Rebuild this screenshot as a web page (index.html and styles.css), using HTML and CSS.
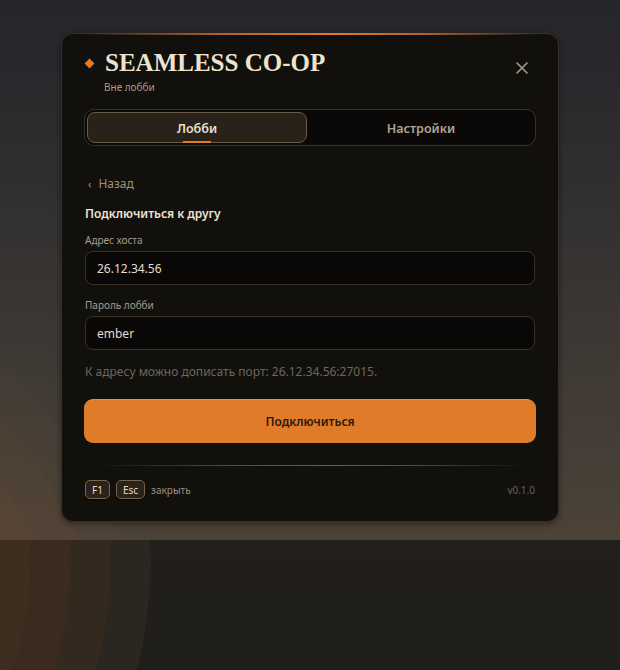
FILE: index.html
```html
<!DOCTYPE html>
<html lang="ru">
<head>
<meta charset="utf-8">
<title>Seamless Co-op</title>
<link rel="stylesheet" href="styles.css">
</head>
<body>
<div class="stage">
  <div class="card">
    <header class="head">
      <div class="brand">
        <div class="title-row">
          <span class="diamond"></span>
          <h1 class="title">SEAMLESS CO-OP</h1>
        </div>
        <div class="subtitle">Вне лобби</div>
      </div>
      <button class="close" aria-label="Закрыть">
        <svg width="14" height="14" viewBox="0 0 14 14"><path d="M2 2L12 12M12 2L2 12" stroke="currentColor" stroke-width="1.6" stroke-linecap="round"/></svg>
      </button>
    </header>

    <nav class="tabs">
      <div class="tab active"><span class="tab-label">Лобби</span></div>
      <div class="tab">Настройки</div>
    </nav>

    <div class="back"><span class="chev">‹</span>Назад</div>

    <h2 class="section">Подключиться к другу</h2>

    <label class="label">Адрес хоста</label>
    <div class="input">26.12.34.56</div>

    <label class="label">Пароль лобби</label>
    <div class="input">ember</div>

    <p class="hint">К адресу можно дописать порт: 26.12.34.56:27015.</p>

    <button class="primary">Подключиться</button>

    <div class="divider"></div>

    <footer class="foot">
      <div class="keys">
        <span class="kbd">F1</span>
        <span class="kbd">Esc</span>
        <span class="keys-text">закрыть</span>
      </div>
      <span class="version">v0.1.0</span>
    </footer>
  </div>
</div>
</body>
</html>
```
FILE: styles.css
```css
html {
  height: 100%;
  background:
    radial-gradient(circle at -300px 560px,
      #3e2e1f 0, #3e2e1f 330px,
      #3a2b1e 331px, #3a2b1e 370px,
      #33291f 371px, #33291f 410px,
      #2b2620 411px, #2b2620 450px,
      rgba(37,34,31,0) 451px),
    linear-gradient(#262320, #201e1b);
}
body {
  margin: 0;
  font-family: "Noto Sans", "Open Sans", sans-serif;
}
.stage {
  height: 540px;
  padding-top: 33px;
  box-sizing: border-box;
  display: flex;
  justify-content: center;
  background:
    radial-gradient(circle at -300px 700px,
      rgba(120,80,45,0.35) 0, rgba(120,80,45,0.35) 330px,
      rgba(120,80,45,0.25) 331px, rgba(120,80,45,0.25) 370px,
      rgba(120,80,45,0.14) 371px, rgba(120,80,45,0.14) 410px,
      rgba(120,80,45,0.06) 411px, rgba(120,80,45,0.06) 450px,
      rgba(120,80,45,0) 451px),
    linear-gradient(#25262b 0%, #2e2d2f 30%, #403a35 70%, #4c4238 100%);
}
.card {
  width: 498px;
  height: 489px;
  box-sizing: border-box;
  padding: 13px 23px 0;
  background: #12100d;
  border: 1px solid #3a2f22;
  border-radius: 12px;
  box-shadow: 0 2px 6px rgba(0,0,0,0.4);
  position: relative;
}
.card::before {
  content: "";
  position: absolute;
  left: 20px;
  right: 20px;
  top: -1px;
  height: 2px;
  background: linear-gradient(90deg, rgba(224,123,42,0) 0%, #b0622a 30%, #e07b2a 55%, #b0622a 75%, rgba(224,123,42,0) 100%);
}
.head {
  display: flex;
  justify-content: space-between;
  align-items: flex-start;
}
.title-row {
  display: flex;
  align-items: center;
  gap: 12px;
}
.diamond {
  width: 7px;
  height: 7px;
  background: #e07b2a;
  transform: rotate(45deg);
  margin-left: 1px;
}
.title {
  margin: 0;
  font-family: "Liberation Serif", "Times New Roman", serif;
  font-weight: 700;
  font-size: 25px;
  line-height: 32px;
  color: #eee3cf;
}
.subtitle {
  margin: 1px 0 0 19px;
  font-size: 10px;
  line-height: 14px;
  color: #a79a86;
}
.close {
  margin-top: 14px;
  margin-right: 6px;
  background: none;
  border: 0;
  padding: 0;
  color: #a8998a;
  display: flex;
}
.tabs {
  margin-top: 15px;
  display: flex;
  padding: 2px;
  height: 37px;
  box-sizing: border-box;
  margin-left: -1px;
  margin-right: -1px;
  background: #0b0908;
  border: 1px solid #3a3026;
  border-radius: 10px;
  gap: 2px;
}
.tab {
  flex: 1;
  display: flex;
  align-items: center;
  justify-content: center;
  padding-top: 1px;
  font-size: 12.5px;
  font-weight: 600;
  color: #b0a493;
  border-radius: 8px;
  border: 1px solid transparent;
}
.tab.active {
  flex: 0 0 218px;
  background: #29221b;
  border-color: #6b5a45;
  color: #ece0cc;
}
.tab-label {
  position: relative;
}
.tab-label::after {
  content: "";
  position: absolute;
  left: 50%;
  width: 28px;
  margin-left: -14px;
  bottom: -6px;
  height: 2px;
  background: #e07b2a;
}
.back {
  margin-top: 30px;
  margin-left: 3px;
  font-size: 12px;
  line-height: 16px;
  color: #9d917f;
  display: flex;
  align-items: center;
}
.chev {
  margin-right: 7px;
  font-size: 11px;
}
.section {
  margin: 14px 0 0;
  font-size: 12px;
  line-height: 16px;
  font-weight: 600;
  color: #ece3d3;
}
.label {
  display: block;
  margin-top: 11px;
  font-size: 10px;
  line-height: 14px;
  color: #a99c8a;
}
.input {
  margin-top: 4px;
  height: 34px;
  box-sizing: border-box;
  padding: 0 11px;
  display: flex;
  align-items: center;
  background: #0a0807;
  border: 1px solid #3b3126;
  border-radius: 8px;
  font-size: 12px;
  color: #e4dccf;
}
.input + .label {
  margin-top: 13px;
}
.hint {
  margin: 14px 0 0;
  font-size: 12px;
  line-height: 16px;
  color: #6f665b;
}
.primary {
  display: block;
  width: 452px;
  margin: 19px 0 0 -1px;
  height: 44px;
  border: 0;
  border-top: 1px solid #ec8f42;
  border-radius: 9px;
  background: #e07b2a;
  font-family: inherit;
  font-size: 12px;
  font-weight: 600;
  color: #2a1a0c;
}
.divider {
  margin: 22px 6px 0;
  height: 1px;
  background: linear-gradient(90deg, rgba(120,90,50,0) 0%, #5a4630 30%, #7a5c34 55%, #5a4630 75%, rgba(120,90,50,0) 100%);
}
.foot {
  margin-top: 14px;
  display: flex;
  justify-content: space-between;
  align-items: center;
}
.keys {
  display: flex;
  align-items: center;
  gap: 6px;
}
.kbd {
  height: 19px;
  padding: 0 6px;
  box-sizing: border-box;
  display: flex;
  align-items: center;
  background: #2a231b;
  border: 1px solid #7a6548;
  border-radius: 5px;
  font-size: 10px;
  color: #e6dccb;
  box-shadow: 0 1px 0 #000;
}
.keys-text {
  font-size: 10px;
  color: #9d917f;
}
.version {
  font-size: 10px;
  color: #6a6258;
}
```
